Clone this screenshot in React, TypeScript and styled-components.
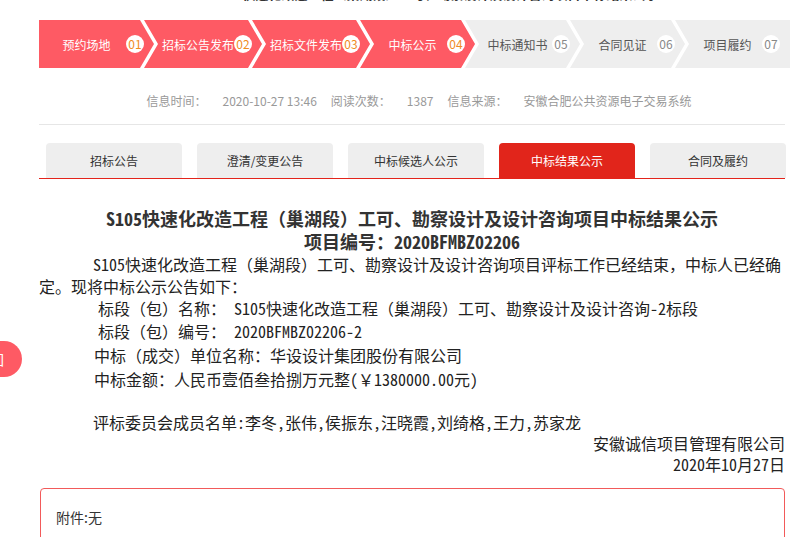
import React from 'react';
import styled, { createGlobalStyle } from 'styled-components';

// ---------- global ----------
const GlobalStyle = createGlobalStyle`
  html, body {
    margin: 0;
    padding: 0;
    background: #fff;
    overflow: hidden;
  }
  body {
    font-family: "Noto Sans CJK SC", "Liberation Sans", sans-serif;
    color: #333;
  }
`;

const ARROW = 14;
const GAP = 4;

const STEPS = [
  { name: '预约场地', no: '01' },
  { name: '招标公告发布', no: '02' },
  { name: '招标文件发布', no: '03' },
  { name: '中标公示', no: '04' },
  { name: '中标通知书', no: '05' },
  { name: '合同见证', no: '06' },
  { name: '项目履约', no: '07' },
];
const ACTIVE_UNTIL = 3;

const TABS = ['招标公告', '澄清/变更公告', '中标候选人公示', '中标结果公示', '合同及履约'];
const ACTIVE_TAB = 3;

// ---------- layout ----------
const Page = styled.div`
  width: 746px;
  margin-left: 39px;
`;

// page is scrolled: only the bottom of the heading is visible
const PageHeading = styled.div`
  margin-top: -16px;
  padding-left: 46px;
  height: 20px;
  line-height: 20px;
  font-size: 13px;
  font-weight: bold;
  color: #333;
  text-align: center;
  white-space: nowrap;
  overflow: hidden;
`;

// ---------- step bar ----------
const StepBar = styled.div`
  display: flex;
  margin-top: 16px;
  height: 48px;
`;

const Step = styled.div<{ $active: boolean; $first: boolean; $last: boolean }>`
  flex: 0 0 115px;
  box-sizing: border-box;
  height: 48px;
  margin-left: ${p => (p.$first ? 0 : GAP - ARROW)}px;
  padding: 0 10px 0 ${p => (p.$first ? 8 : 18)}px;
  display: flex;
  align-items: center;
  background: ${p => (p.$active ? '#fe5a64' : '#eeeeee')};
  color: ${p => (p.$active ? '#fff' : '#555')};
  font-size: 12px;
  clip-path: ${p => {
    const left = p.$first ? '0 100%, 0 0' : `0 100%, ${ARROW}px 50%, 0 0`;
    const right = p.$last
      ? '100% 0, 100% 100%'
      : `calc(100% - ${ARROW}px) 0, 100% 50%, calc(100% - ${ARROW}px) 100%`;
    return `polygon(${left}, ${right})`;
  }};
`;

const StepName = styled.span`
  flex: 1;
  text-align: center;
  white-space: nowrap;
`;

const StepNo = styled.span<{ $active: boolean }>`
  flex: 0 0 18px;
  height: 18px;
  border-radius: 50%;
  background: #fff;
  color: ${p => (p.$active ? '#f08c1e' : '#888')};
  font-size: 12px;
  line-height: 18px;
  text-align: center;
  position: relative;
  z-index: 1;
`;

// ---------- info row ----------
const InfoRow = styled.div`
  display: flex;
  justify-content: center;
  padding: 24px 0 14px 28px;
  line-height: 18px;
  font-size: 12px;
  color: #999;
  border-bottom: 1px solid #e6e6e6;
`;

const InfoItem = styled.span`
  margin-right: 14px;
  white-space: nowrap;
`;

const InfoLabel = styled.span`
  margin-right: 16px;
`;

// ---------- tabs ----------
const TabBar = styled.div`
  display: flex;
  gap: 15px;
  margin-top: 18px;
  padding-left: 7px;
  border-bottom: 1px solid #e3241b;
`;

const Tab = styled.div<{ $active: boolean }>`
  flex: 0 0 136px;
  height: 35px;
  line-height: 35px;
  border-radius: 4px 4px 0 0;
  text-align: center;
  font-size: 12px;
  background: ${p => (p.$active ? '#e1251b' : '#eeeeee')};
  color: ${p => (p.$active ? '#fff' : '#333')};
`;

// ---------- article ----------
const Article = styled.div`
  font-family: "Noto Sans Mono CJK SC", "Noto Sans CJK SC", "Liberation Mono", monospace;
  color: #222;
`;

const Title = styled.h1`
  margin: 28px 0 0 0;
  font-size: 18px;
  line-height: 23px;
  font-weight: bold;
  color: #333;
  text-align: center;
  white-space: nowrap;
`;

const Line = styled.div<{ $indent?: number; $lh?: number; $right?: boolean }>`
  font-size: 16px;
  line-height: ${p => p.$lh ?? 22}px;
  padding-left: ${p => p.$indent ?? 0}px;
  text-align: ${p => (p.$right ? 'right' : 'left')};
  white-space: nowrap;
`;

const Blank = styled.div`
  height: 20px;
`;

const AttachBox = styled.div`
  margin-top: 14px;
  margin-left: 1px;
  padding: 18px 15px 40px 15px;
  border: 1px solid #f25a5a;
  border-radius: 4px;
  font-size: 14px;
  line-height: 20px;
  color: #333;
`;

// floating side button (partly off-screen)
const SideButton = styled.div`
  position: fixed;
  top: 341px;
  left: -40px;
  width: 62px;
  height: 36px;
  border-radius: 18px;
  background: #fe5a64;
  color: #fff;
  font-size: 14px;
  line-height: 36px;
  padding-left: 30px;
  box-sizing: border-box;
`;

export default function App() {
  return (
    <>
      <GlobalStyle />
      <Page>
        <PageHeading>S105快速化改造工程（巢湖段）工可、勘察设计及设计咨询项目中标结果公示</PageHeading>

        <StepBar>
          {STEPS.map((s, i) => (
            <Step
              key={s.no}
              $active={i <= ACTIVE_UNTIL}
              $first={i === 0}
              $last={i === STEPS.length - 1}
            >
              <StepName>{s.name}</StepName>
              <StepNo $active={i <= ACTIVE_UNTIL}>{s.no}</StepNo>
            </Step>
          ))}
        </StepBar>

        <InfoRow>
          <InfoItem><InfoLabel>信息时间：</InfoLabel>2020-10-27 13:46</InfoItem>
          <InfoItem><InfoLabel>阅读次数：</InfoLabel>1387</InfoItem>
          <InfoItem><InfoLabel>信息来源：</InfoLabel>安徽合肥公共资源电子交易系统</InfoItem>
        </InfoRow>

        <TabBar>
          {TABS.map((t, i) => (
            <Tab key={t} $active={i === ACTIVE_TAB}>{t}</Tab>
          ))}
        </TabBar>

        <Article>
          <Title>
            S105快速化改造工程（巢湖段）工可、勘察设计及设计咨询项目中标结果公示
            <br />
            项目编号：2020BFMBZ02206
          </Title>
          <Line $indent={54}>S105快速化改造工程（巢湖段）工可、勘察设计及设计咨询项目评标工作已经结束，中标人已经确</Line>
          <Line>定。现将中标公示公告如下：</Line>
          <Line $indent={59}>标段（包）名称： S105快速化改造工程（巢湖段）工可、勘察设计及设计咨询-2标段</Line>
          <Line $indent={59} $lh={24}>标段（包）编号： 2020BFMBZ02206-2</Line>
          <Line $indent={55} $lh={24}>中标（成交）单位名称：华设设计集团股份有限公司</Line>
          <Line $indent={55} $lh={24}>中标金额：人民币壹佰叁拾捌万元整(￥1380000.00元)</Line>
          <Blank />
          <Line $indent={54}>评标委员会成员名单:李冬,张伟,侯振东,汪晓霞,刘绮格,王力,苏家龙</Line>
          <Line $right $lh={21}>安徽诚信项目管理有限公司</Line>
          <Line $right $lh={20}>2020年10月27日</Line>
        </Article>

        <AttachBox>附件:无</AttachBox>
      </Page>
      <SideButton>回</SideButton>
    </>
  );
}
